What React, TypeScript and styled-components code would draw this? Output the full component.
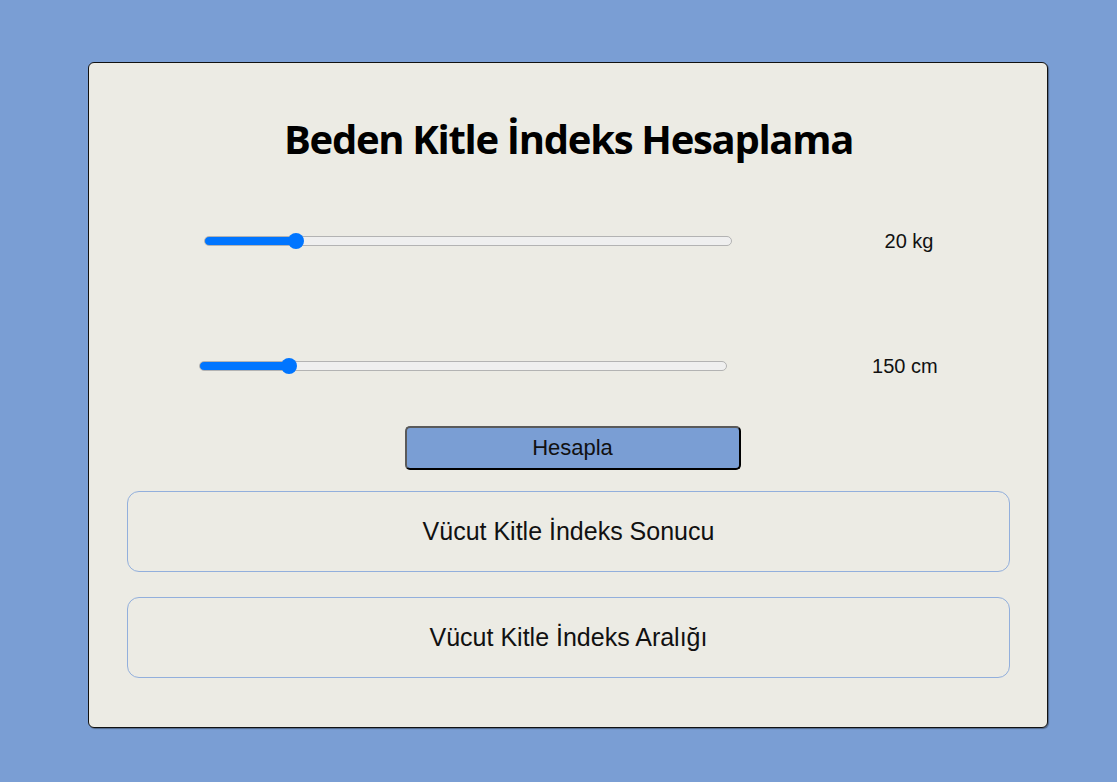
import React, { useState } from "react";
import styled, { createGlobalStyle } from "styled-components";

const GlobalStyle = createGlobalStyle`
  html, body {
    margin: 0;
    padding: 0;
    background: #7a9ed4;
  }
  body {
    font-family: "Liberation Sans", Arial, sans-serif;
  }
`;

const Page = styled.div`
  width: 1117px;
  height: 782px;
  box-sizing: border-box;
  padding: 62px 70px 0 88px;
  background: #7a9ed4;
`;

const Card = styled.div`
  width: 960px;
  height: 666px;
  box-sizing: border-box;
  padding: 0 37px 0 38px;
  background: #ecebe4;
  border: 1px solid #111;
  border-radius: 6px;
  box-shadow: 1px 1px 1px rgba(0, 0, 0, 0.35);
  display: flex;
  flex-direction: column;
`;

const Title = styled.h1`
  margin: 52px 0 0;
  font-family: "Open Sans", "Noto Sans", sans-serif;
  font-weight: 700;
  font-size: 40px;
  letter-spacing: -1.3px;
  line-height: 48px;
  text-align: center;
  color: #000;
`;

const SliderRow = styled.div<{ $top: number }>`
  margin-top: ${(p) => p.$top}px;
  height: 60px;
  display: flex;
  align-items: center;
  justify-content: space-around;
`;

const Range = styled.input`
  -webkit-appearance: none;
  appearance: none;
  width: 528px;
  height: 10px;
  margin: 0;
  border: 1px solid #b3b3b3;
  border-radius: 5px;
  box-sizing: border-box;
  outline: none;

  &::-webkit-slider-thumb {
    -webkit-appearance: none;
    appearance: none;
    width: 16px;
    height: 16px;
    border-radius: 50%;
    background: #0075ff;
    border: none;
    cursor: pointer;
  }
`;

const ValueLabel = styled.span`
  font-size: 20px;
  color: #111;
`;

const ButtonRow = styled.div`
  margin-top: 30px;
  display: flex;
  justify-content: center;
  padding-left: 8px;
`;

const CalcButton = styled.button`
  width: 336px;
  height: 44px;
  background: #7a9ed4;
  border: 2px solid #5a5a5a;
  border-right-color: #000;
  border-bottom-color: #000;
  border-radius: 5px;
  font-family: "Liberation Sans", Arial, sans-serif;
  font-size: 22px;
  color: #111;
  cursor: pointer;
`;

const ResultBox = styled.div<{ $top: number }>`
  margin-top: ${(p) => p.$top}px;
  height: 81px;
  box-sizing: border-box;
  border: 1px solid #92afdc;
  border-radius: 12px;
  display: flex;
  align-items: center;
  justify-content: center;
  font-size: 25px;
  color: #111;
`;

type SliderProps = {
  min: number;
  max: number;
  value: number;
  unit: string;
  top: number;
  onChange: (v: number) => void;
};

const Slider = ({ min, max, value, unit, top, onChange }: SliderProps) => {
  const pct = ((value - min) / (max - min)) * 100;
  return (
    <SliderRow $top={top}>
      <Range
        type="range"
        min={min}
        max={max}
        value={value}
        onChange={(e) => onChange(Number(e.target.value))}
        style={{
          background: `linear-gradient(to right, #0075ff 0%, #0075ff ${pct}%, #efefef ${pct}%, #efefef 100%)`,
        }}
      />
      <ValueLabel>
        {value} {unit}
      </ValueLabel>
    </SliderRow>
  );
};

const App = () => {
  const [kilo, setKilo] = useState(20);
  const [boy, setBoy] = useState(150);

  return (
    <Page>
      <GlobalStyle />
      <Card>
        <Title>Beden Kitle İndeks Hesaplama</Title>
        <Slider min={0} max={122} value={kilo} unit="kg" top={48} onChange={setKilo} />
        <Slider min={120} max={310} value={boy} unit="cm" top={65} onChange={setBoy} />
        <ButtonRow>
          <CalcButton>Hesapla</CalcButton>
        </ButtonRow>
        <ResultBox $top={21}>Vücut Kitle İndeks Sonucu</ResultBox>
        <ResultBox $top={25}>Vücut Kitle İndeks Aralığı</ResultBox>
      </Card>
    </Page>
  );
};

export default App;
